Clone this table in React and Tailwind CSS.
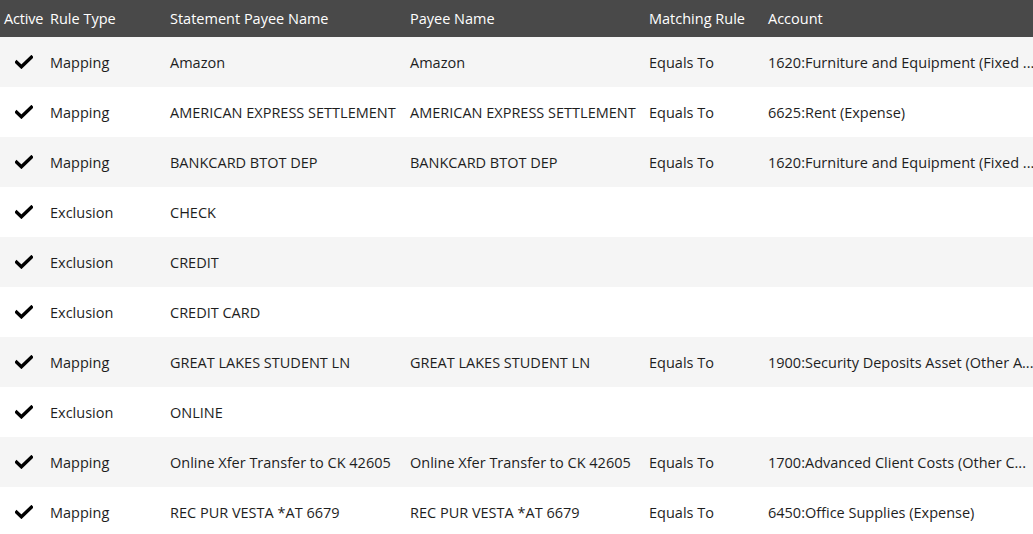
import React from "react";

const rows = [
  ["Mapping", "Amazon", "Amazon", "Equals To", "1620:Furniture and Equipment (Fixed ..."],
  ["Mapping", "AMERICAN EXPRESS SETTLEMENT", "AMERICAN EXPRESS SETTLEMENT", "Equals To", "6625:Rent (Expense)"],
  ["Mapping", "BANKCARD BTOT DEP", "BANKCARD BTOT DEP", "Equals To", "1620:Furniture and Equipment (Fixed ..."],
  ["Exclusion", "CHECK", "", "", ""],
  ["Exclusion", "CREDIT", "", "", ""],
  ["Exclusion", "CREDIT CARD", "", "", ""],
  ["Mapping", "GREAT LAKES STUDENT LN", "GREAT LAKES STUDENT LN", "Equals To", "1900:Security Deposits Asset (Other A..."],
  ["Exclusion", "ONLINE", "", "", ""],
  ["Mapping", "Online Xfer Transfer to CK 42605", "Online Xfer Transfer to CK 42605", "Equals To", "1700:Advanced Client Costs (Other C..."],
  ["Mapping", "REC PUR VESTA *AT 6679", "REC PUR VESTA *AT 6679", "Equals To", "6450:Office Supplies (Expense)"],
];

function Check() {
  return (
    <svg width="18" height="14" viewBox="0 0 18 14" className="block">
      <path d="M1.6 7.2 L6.4 11.8 L16.4 2.2" fill="none" stroke="#000" strokeWidth="3.4" strokeLinecap="square" strokeLinejoin="miter" />
    </svg>
  );
}

const grid = "grid grid-cols-[46px_120px_240px_239px_119px_269px]";

export default function App() {
  return (
    <div className="w-[1033px] h-[534px] overflow-hidden bg-white text-[14.5px] text-[#1e1e1e]" style={{ fontFamily: '"Open Sans", "Noto Sans", sans-serif' }}>
      <div className={`${grid} h-[37px] bg-[#494949] text-white items-center`}>
        <div className="pl-[4px] whitespace-nowrap tracking-[-0.2px]">Active</div>
        <div className="pl-[4px]">Rule Type</div>
        <div className="pl-[4px]">Statement Payee Name</div>
        <div className="pl-[4px]">Payee Name</div>
        <div className="pl-[4px]">Matching Rule</div>
        <div className="pl-[4px]">Account</div>
      </div>
      {rows.map((r, i) => (
        <div key={i} className={`${grid} h-[50px] items-center pt-[2px] ${i % 2 === 0 ? "bg-[#f5f5f5]" : "bg-white"}`}>
          <div className="flex justify-center pl-[1px] -mt-[3px]"><Check /></div>
          <div className="pl-[4px] whitespace-nowrap">{r[0]}</div>
          <div className="pl-[4px] whitespace-nowrap overflow-hidden">{r[1]}</div>
          <div className="pl-[4px] whitespace-nowrap overflow-hidden">{r[2]}</div>
          <div className="pl-[4px] whitespace-nowrap">{r[3]}</div>
          <div className="pl-[4px] whitespace-nowrap overflow-hidden">{r[4]}</div>
        </div>
      ))}
    </div>
  );
}
